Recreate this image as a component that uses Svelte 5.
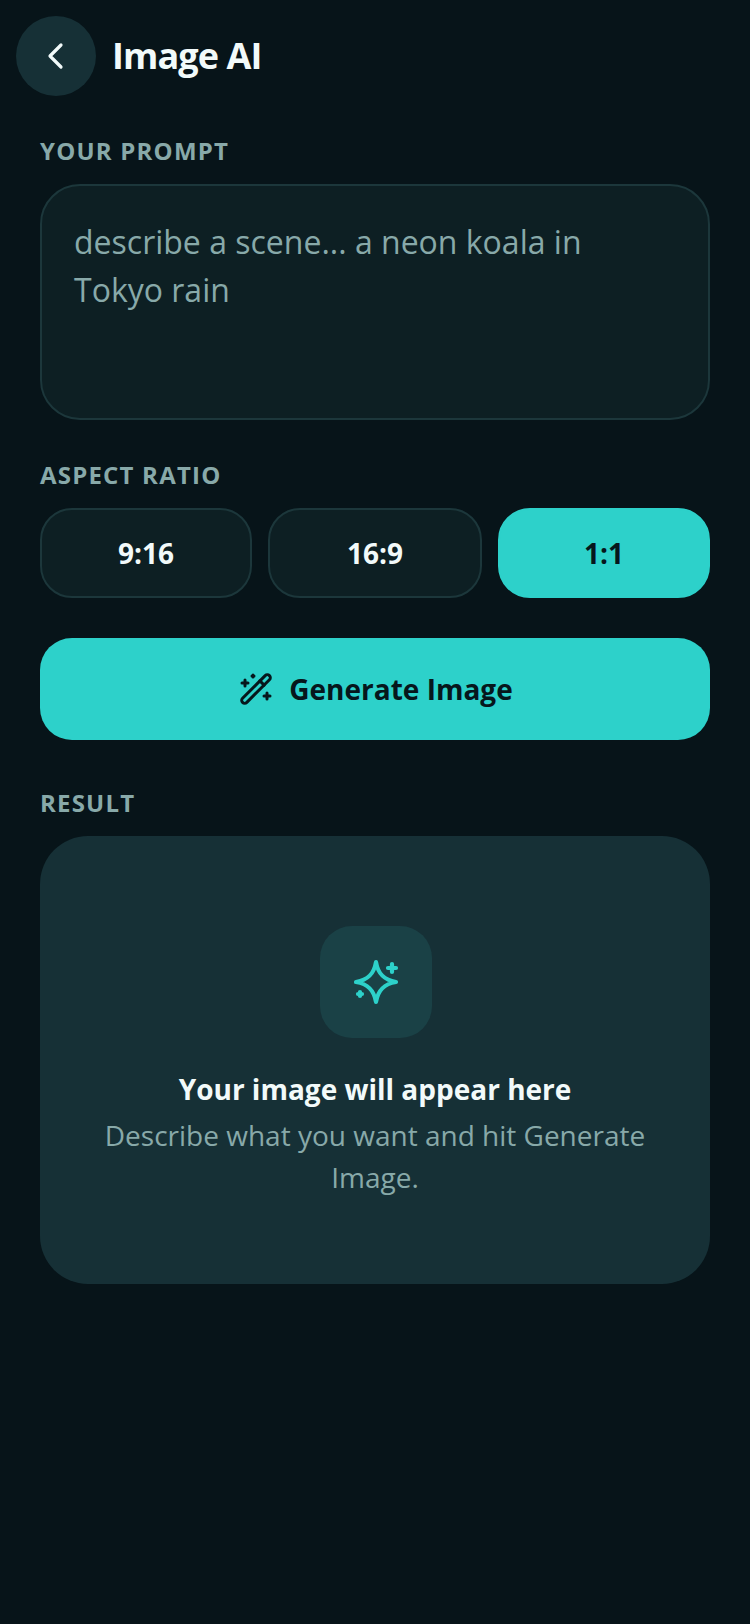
<script>
  let prompt = $state("");
  let ratio = $state("1:1");
  const ratios = ["9:16", "16:9", "1:1"];
</script>

<div class="page">
  <header class="top">
    <button class="back" aria-label="Back">
      <svg width="40" height="40" viewBox="0 0 40 40" fill="none" stroke="#f2fafa" stroke-width="3.200" stroke-linecap="round" stroke-linejoin="round">
        <path d="M25 9 14 20l11 11" />
      </svg>
    </button>
    <h1>Image AI</h1>
  </header>

  <main class="content">
    <div class="label first">YOUR PROMPT</div>
    <textarea
      class="prompt"
      bind:value={prompt}
      placeholder="describe a scene... a neon koala in Tokyo rain"
    ></textarea>

    <div class="label ratio-label">ASPECT RATIO</div>
    <div class="ratios">
      {#each ratios as r}
        <button class="ratio" class:active={ratio === r} onclick={() => (ratio = r)}>{r}</button>
      {/each}
    </div>

    <button class="generate">
      <svg width="40" height="40" viewBox="0 0 40 40" fill="none" stroke="#06171c" stroke-width="3" stroke-linecap="round" stroke-linejoin="round">
        <rect x="-3" y="-19" width="6" height="38" rx="3" transform="translate(19 20) rotate(45)" />
        <path d="M22.900 11.900 27.100 16.100" />
        <path d="M8 11v6M5 14h6" />
        <path d="M16 6v2M15 7h2" />
        <path d="M30 24v6M27 27h6" />
      </svg>
      <span>Generate Image</span>
    </button>

    <div class="label result-label">RESULT</div>
    <section class="result">
      <div class="tile">
        <svg width="56" height="56" viewBox="0 0 56 56" fill="none" stroke="#2dd1ca" stroke-width="4.200" stroke-linecap="round" stroke-linejoin="round">
          <path d="M28 8c2 12 8 18 20 20-12 2-18 8-20 20-2-12-8-18-20-20 12-2 18-8 20-20Z" />
          <path d="M44 10v8M40 14h8" />
          <path d="M12 38v4M10 40h4" />
        </svg>
      </div>
      <div class="empty-title">Your image will appear here</div>
      <p class="empty-sub">Describe what you want and hit Generate Image.</p>
    </section>
  </main>
</div>

<style>
  :global(body) {
    margin: 0;
    background: #071419;
  }

  .page {
    height: 1624px;
    background: #071419;
    color: #f2fafa;
    font-family: "Open Sans", sans-serif;
    overflow: hidden;
  }

  .top {
    display: flex;
    align-items: center;
    gap: 16px;
    padding: 16px 16px 0;
  }

  .back {
    width: 80px;
    height: 80px;
    border: none;
    border-radius: 50%;
    background: #163036;
    display: flex;
    align-items: center;
    justify-content: center;
    padding: 0;
  }

  h1 {
    margin: 0;
    font-size: 36px;
    font-weight: 700;
    letter-spacing: -0.9px;
    line-height: 48px;
    color: #f2fafa;
  }

  .content {
    padding: 0 40px;
    display: flex;
    flex-direction: column;
  }

  .label {
    font-size: 24px;
    line-height: 32px;
    font-weight: 700;
    letter-spacing: 1.200px;
    color: #88a9a9;
  }

  .first {
    margin-top: 39px;
  }

  .prompt {
    margin-top: 17px;
    height: 236px;
    box-sizing: border-box;
    padding: 32px 32px;
    border: 2px solid #1c373b;
    border-radius: 40px;
    background: #0d1f23;
    color: #f2fafa;
    font-family: inherit;
    font-size: 32px;
    line-height: 48px;
    resize: none;
    outline: none;
  }

  .prompt::placeholder {
    color: #88a9a9;
    opacity: 1;
  }

  .ratio-label {
    margin-top: 39px;
  }

  .ratios {
    margin-top: 17px;
    display: grid;
    grid-template-columns: 1fr 214px 1fr;
    gap: 16px;
  }

  .ratio {
    height: 90px;
    box-sizing: border-box;
    border: 2px solid #1c373b;
    border-radius: 32px;
    background: #0d1f23;
    color: #f2fafa;
    font-family: inherit;
    font-size: 28px;
    font-weight: 700;
    padding: 0;
  }

  .ratio.active {
    background: #2dd1ca;
    border-color: #2dd1ca;
    color: #06171c;
  }

  .generate {
    margin-top: 40px;
    height: 102px;
    border: none;
    border-radius: 32px;
    background: #2dd1ca;
    color: #06171c;
    font-family: inherit;
    font-size: 28px;
    font-weight: 700;
    display: flex;
    align-items: center;
    justify-content: center;
    gap: 12px;
    padding: 0;
  }

  .result-label {
    margin-top: 47px;
  }

  .result {
    margin-top: 17px;
    height: 448px;
    box-sizing: border-box;
    border-radius: 48px;
    background: #163036;
    padding: 90px 40px 0;
    display: flex;
    flex-direction: column;
    align-items: center;
    text-align: center;
  }

  .tile {
    width: 112px;
    height: 112px;
    margin-left: 2px;
    border-radius: 32px;
    background: #1a4146;
    display: flex;
    align-items: center;
    justify-content: center;
  }

  .empty-title {
    margin-top: 31px;
    font-size: 28px;
    line-height: 40px;
    font-weight: 700;
    color: #f2fafa;
  }

  .empty-sub {
    margin: 5px 0 0;
    font-size: 28px;
    line-height: 42px;
    color: #88a9a9;
  }
</style>
